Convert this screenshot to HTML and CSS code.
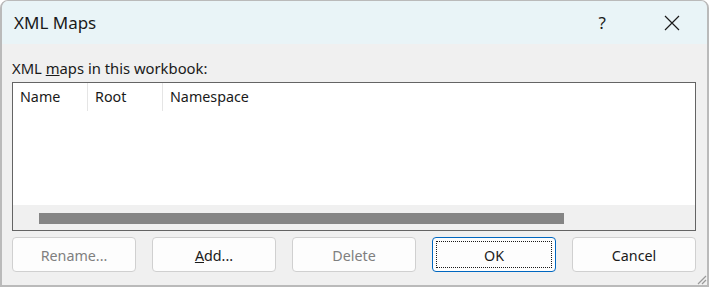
FILE: index.html
```html
<!DOCTYPE html>
<html lang="en">
<head>
    <meta charset="UTF-8">
    <title>XML Maps</title>
    <link rel="stylesheet" href="styles.css">
</head>
<body>
    <div class="window">
        <div class="titlebar">
            <span class="title">XML Maps</span>
            <span class="help">?</span>
            <svg class="close" width="16" height="16" viewBox="0 0 16 16">
                <path d="M1 1 L15 15 M15 1 L1 15" stroke="#1a1a1a" stroke-width="1.2" fill="none"/>
            </svg>
        </div>

        <div class="content">
            <div class="label">XML <u>m</u>aps in this workbook:</div>

            <div class="listview">
                <div class="list-header">
                    <div class="col col-name">Name</div>
                    <div class="col col-root">Root</div>
                    <div class="col col-ns">Namespace</div>
                </div>
                <div class="list-body"></div>
                <div class="hscroll">
                    <div class="thumb"></div>
                </div>
            </div>

            <div class="buttons">
                <button class="btn disabled">Rename...</button>
                <button class="btn"><u>A</u>dd...</button>
                <button class="btn disabled">Delete</button>
                <button class="btn default">OK</button>
                <button class="btn">Cancel</button>
            </div>
        </div>

        <svg class="grip" width="12" height="12" viewBox="0 0 12 12">
            <path d="M11 3 L3 11 M11 7 L7 11" stroke="#9a9a9a" stroke-width="1.2" fill="none"/>
        </svg>
    </div>
</body>
</html>
```

FILE: styles.css
```css
body {
    margin: 0;
    font-family: "Noto Sans", "Open Sans", sans-serif;
    color: #1a1a1a;
    background: #ffffff;
}

.window {
    position: relative;
    width: 709px;
    height: 287px;
    box-sizing: border-box;
    border: 2px solid #bababa;
    border-top-width: 1px;
    border-radius: 8px 8px 0 0;
    background: #f0f0f0;
    overflow: hidden;
    display: flex;
    flex-direction: column;
}

.titlebar {
    height: 43px;
    background: #e9f4f7;
    display: flex;
    align-items: center;
    padding: 0 27px 0 12px;
    flex-shrink: 0;
}

.title {
    font-size: 17px;
    flex: 1;
}

.help {
    font-size: 17px;
    margin-right: 58px;
}

.close {
    display: block;
}

.content {
    padding: 14px 11px 0 10px;
    display: flex;
    flex-direction: column;
}

.label {
    font-size: 14.8px;
    line-height: 20px;
    height: 24px;
}

.listview {
    height: 149px;
    box-sizing: border-box;
    border: 1px solid #646464;
    background: #ffffff;
    display: flex;
    flex-direction: column;
}

.list-header {
    display: flex;
    height: 30px;
    font-size: 14.3px;
}

.col {
    padding: 4px 0 0 7px;
    box-sizing: border-box;
    border-right: 1px solid #e5e5e5;
    height: 28px;
}

.col-name {
    width: 75px;
}

.col-root {
    width: 75px;
}

.col-ns {
    border-right: none;
}

.list-body {
    flex: 1;
}

.hscroll {
    height: 25px;
    background: #f0f0f0;
    padding: 8px 0 0 26px;
    box-sizing: border-box;
}

.thumb {
    width: 525px;
    height: 11px;
    background: #858585;
}

.buttons {
    display: flex;
    gap: 16px;
    margin-top: 6px;
}

.btn {
    width: 124px;
    height: 35px;
    border: 1px solid #d0d0d0;
    border-radius: 4px;
    background: #fdfdfd;
    font-family: inherit;
    font-size: 14.3px;
    color: #1a1a1a;
    padding: 1px 0 0;
}

.btn.disabled {
    color: #7f7f7f;
}

.btn.default {
    border-color: #0067c0;
    outline: 1px dotted #1a1a1a;
    outline-offset: -5px;
}

.grip {
    position: absolute;
    right: 0;
    bottom: 0;
}
```
